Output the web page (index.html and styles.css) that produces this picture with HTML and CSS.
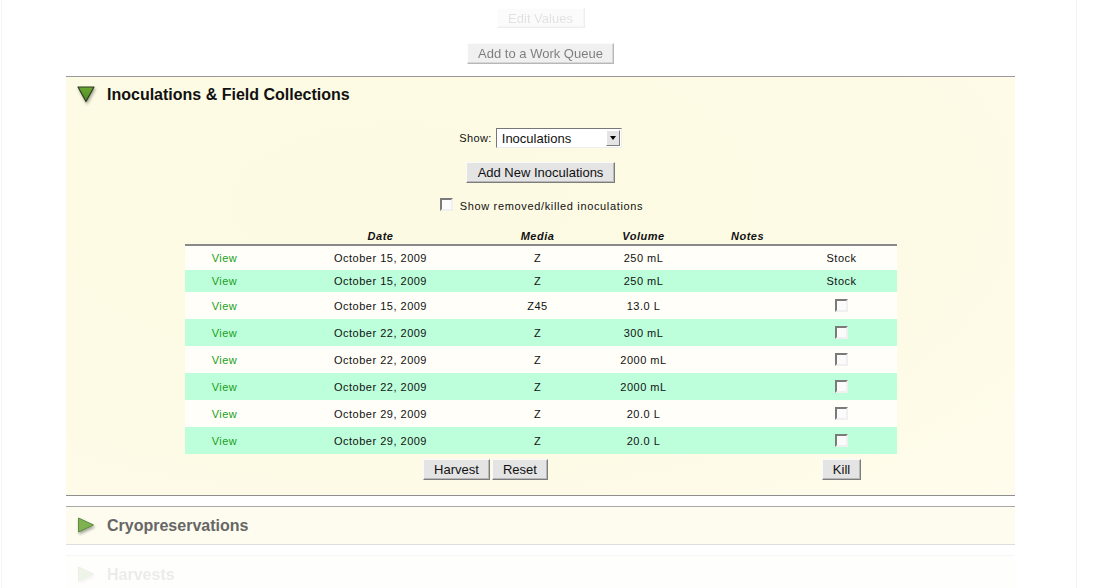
FILE: index.html
```html
<!DOCTYPE html>
<html>
<head>
<meta charset="utf-8">
<link rel="stylesheet" href="styles.css">
</head>
<body>
<div class="page">
  <div class="actions">
    <button class="btn btn-ghost">Edit Values</button>
    <button class="btn btn-faded">Add to a Work Queue</button>
  </div>

  <div class="section open">
    <div class="sec-head">
      <svg class="tri" width="18" height="17" viewBox="0 0 18 17">
        <defs>
          <linearGradient id="gd" x1="0" y1="0" x2="0" y2="1">
            <stop offset="0" stop-color="#6aa733"/>
            <stop offset="1" stop-color="#4b8a22"/>
          </linearGradient>
        </defs>
        <polygon points="1,1 17,1 9,15.5" fill="url(#gd)" stroke="#2e3a22" stroke-width="1.2" stroke-linejoin="round"/>
      </svg>
      <h2 class="sec-title">Inoculations &amp; Field Collections</h2>
    </div>

    <div class="sec-body">
      <div class="show-row">
        <span class="lbl">Show:</span>
        <div class="select">
          <span class="sel-text">Inoculations</span>
          <span class="sel-arrow"><span class="caret"></span></span>
        </div>
      </div>
      <button class="btn btn-add">Add New Inoculations</button>
      <label class="check-row"><span class="cb"></span><span>Show removed/killed inoculations</span></label>

      <table class="grid">
        <colgroup>
          <col class="c1"><col class="c2"><col class="c3"><col class="c4"><col class="c5"><col class="c6">
        </colgroup>
        <thead>
          <tr><th></th><th>Date</th><th>Media</th><th>Volume</th><th>Notes</th><th></th></tr>
        </thead>
        <tbody>
          <tr class="short"><td><a class="view">View</a></td><td>October 15, 2009</td><td>Z</td><td>250 mL</td><td></td><td>Stock</td></tr>
          <tr class="short alt"><td><a class="view">View</a></td><td>October 15, 2009</td><td>Z</td><td>250 mL</td><td></td><td>Stock</td></tr>
          <tr><td><a class="view">View</a></td><td>October 15, 2009</td><td>Z45</td><td>13.0 L</td><td></td><td><span class="cb"></span></td></tr>
          <tr class="alt"><td><a class="view">View</a></td><td>October 22, 2009</td><td>Z</td><td>300 mL</td><td></td><td><span class="cb"></span></td></tr>
          <tr><td><a class="view">View</a></td><td>October 22, 2009</td><td>Z</td><td>2000 mL</td><td></td><td><span class="cb"></span></td></tr>
          <tr class="alt"><td><a class="view">View</a></td><td>October 22, 2009</td><td>Z</td><td>2000 mL</td><td></td><td><span class="cb"></span></td></tr>
          <tr><td><a class="view">View</a></td><td>October 29, 2009</td><td>Z</td><td>20.0 L</td><td></td><td><span class="cb"></span></td></tr>
          <tr class="alt"><td><a class="view">View</a></td><td>October 29, 2009</td><td>Z</td><td>20.0 L</td><td></td><td><span class="cb"></span></td></tr>
        </tbody>
        <tfoot>
          <tr><td colspan="5"><button class="btn">Harvest</button><button class="btn">Reset</button></td><td><button class="btn">Kill</button></td></tr>
        </tfoot>
      </table>
    </div>
  </div>

  <div class="section closed">
    <div class="sec-head">
      <svg class="tri" width="18" height="17" viewBox="0 0 18 17">
        <polygon points="1.5,1 16.5,8 1.5,15" fill="#7db24e" stroke="#5f8a44" stroke-width="1" stroke-linejoin="round"/>
      </svg>
      <h2 class="sec-title">Cryopreservations</h2>
    </div>
  </div>

  <div class="section closed faint">
    <div class="sec-head">
      <svg class="tri" width="18" height="17" viewBox="0 0 18 17">
        <polygon points="1.5,1 16.5,8 1.5,15" fill="#7db24e" stroke="#5f8a44" stroke-width="1" stroke-linejoin="round"/>
      </svg>
      <h2 class="sec-title">Harvests</h2>
    </div>
  </div>
</div>
</body>
</html>
```

FILE: styles.css
```css
html, body {
  margin: 0;
  padding: 0;
  background: #ffffff;
  font-family: "Liberation Sans", Arial, sans-serif;
  color: #111;
}

.page {
  width: 1074px;
  height: 588px;
  margin-left: 1px;
  border-left: 1px solid #f5f5f5;
  border-right: 1px solid #f3f3f3;
  overflow: hidden;
}

.actions {
  width: 949px;
  margin-left: 64px;
  display: flex;
  flex-direction: column;
  align-items: center;
  padding-top: 8px;
  gap: 15px;
  height: 76px;
  box-sizing: border-box;
}

.btn {
  font-family: "Liberation Sans", Arial, sans-serif;
  font-size: 13px;
  color: #111;
  background: #e4e4e4;
  border: 1px solid;
  border-color: #fafafa #7d7d7d #7d7d7d #fafafa;
  box-shadow: inset -1px -1px 0 #b8b8b8;
  height: 21px;
  padding: 0 10px;
  margin: 0;
  line-height: 19px;
  cursor: pointer;
}

.btn-ghost {
  opacity: 0.12;
  width: 88px;
  height: 20px;
}

.btn-faded {
  width: 147px;
  height: 21px;
  opacity: 0.55;
}

.section {
  width: 949px;
  margin-left: 64px;
  border-top: 1px solid #9a9a9a;
  background: #fdfbe4;
}

.section.open {
  border-bottom: 1px solid #8e8e8e;
  height: 418px;
  background: radial-gradient(ellipse at 35% 30%, #fdfae3 0%, #fdfbe5 60%, #fffced 100%);
}

.sec-head {
  display: flex;
  align-items: center;
  height: 35px;
  padding-left: 11px;
  gap: 12px;
}

.tri {
  filter: drop-shadow(1px 2px 1.5px rgba(0, 0, 0, 0.35));
  flex: none;
}

.sec-title {
  margin: 0;
  font-size: 16px;
  font-weight: bold;
  color: #111;
}

.sec-body {
  display: flex;
  flex-direction: column;
  align-items: center;
  padding-top: 16px;
}

.show-row {
  display: flex;
  align-items: center;
  gap: 4px;
  height: 20px;
}

.lbl {
  font-size: 11px;
  letter-spacing: 0.4px;
}

.select {
  width: 126px;
  height: 20px;
  box-sizing: border-box;
  border: 1px solid;
  border-color: #777 #eee #eee #777;
  background: #fff;
  display: flex;
  align-items: center;
  justify-content: space-between;
}

.sel-text {
  font-size: 13px;
  padding-left: 5px;
}

.sel-arrow {
  width: 14px;
  height: 16px;
  margin-right: 1px;
  background: #e4e4e4;
  border: 1px solid;
  border-color: #fff #7d7d7d #7d7d7d #fff;
  box-sizing: border-box;
  display: flex;
  align-items: center;
  justify-content: center;
}

.caret {
  width: 0;
  height: 0;
  border-left: 3.5px solid transparent;
  border-right: 3.5px solid transparent;
  border-top: 4px solid #000;
}

.btn-add {
  margin-top: 14px;
  width: 149px;
  padding: 0 8px;
}

.check-row {
  display: flex;
  align-items: center;
  gap: 7px;
  margin-top: 17px;
  font-size: 11px;
  letter-spacing: 0.65px;
  margin-left: 2px;
}

.cb {
  display: inline-block;
  width: 13px;
  height: 13px;
  box-sizing: border-box;
  border: 2px solid;
  border-color: #7a7a7a #f0f0f0 #f0f0f0 #7a7a7a;
  background: #fbfbfb;
  vertical-align: middle;
}

.check-row .cb {
  margin-top: -3px;
}

.grid {
  margin-top: 17px;
  width: 712px;
  border-collapse: collapse;
  table-layout: fixed;
  font-size: 11px;
  letter-spacing: 0.5px;
}

.c1 { width: 80px; }
.c2 { width: 232px; }
.c3 { width: 82px; }
.c4 { width: 130px; }
.c5 { width: 78px; }
.c6 { width: 110px; }

.grid th {
  font-style: italic;
  font-weight: bold;
  height: 14px;
  padding: 0 0 1px;
  border-bottom: 2px solid #898989;
  text-align: center;
  line-height: 13px;
}

.grid td {
  text-align: center;
  padding: 0;
  height: 27px;
}

.grid tbody tr {
  background: #fffef8;
}

.grid tbody tr.alt {
  background: #bdfedb;
}

.grid tbody tr.short td {
  height: 22px;
}

.grid tbody tr:first-child td {
  height: 24px;
}

.view {
  color: #18a018;
  text-decoration: none;
}

.grid tbody .cb {
  margin-top: -2px;
}

.grid tfoot td {
  height: 32px;
  padding-top: 5px;
  vertical-align: top;
}

.grid tfoot .btn {
  letter-spacing: 0;
  margin: 0 1px;
}

.section.closed {
  margin-top: 10px;
  border-top: 1px solid #a9a9a9;
  border-bottom: 1px solid #dedede;
  background: #fefcee;
}

.section.closed .sec-head {
  height: 37px;
}

.section.closed .sec-title {
  color: #666;
}

.section.faint {
  margin-top: 10px;
  opacity: 0.12;
  border-top-color: #bbb;
}
```
